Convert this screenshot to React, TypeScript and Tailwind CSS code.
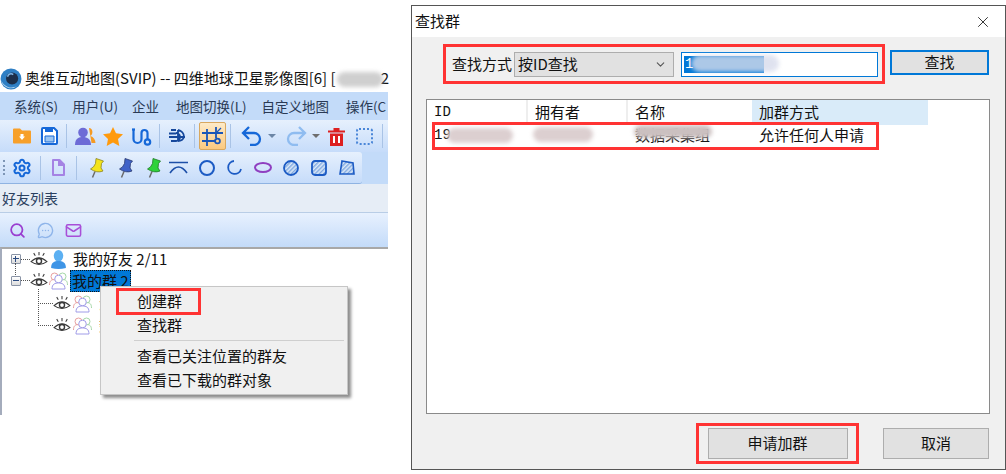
import { Search, MessageCircleMore, Mail, X, ChevronDown, Settings } from "lucide-react";

const cjk = "font-['Microsoft_YaHei','Noto_Sans_CJK_SC',sans-serif]";
const mono = "font-['Liberation_Mono',monospace]";

function Eye() {
  return (
    <svg width="18" height="15" viewBox="0 0 17 14" className="shrink-0" fill="none" stroke="#3a3a3a">
      <path d="M1 9 Q8.500 2 16 9 Q8.500 14.500 1 9Z" strokeWidth="1" />
      <circle cx="8.500" cy="8.500" r="2.400" strokeWidth="1.300" />
      <path d="M8.500 0v3M3.500 1l1.500 2.500M13.500 1L12 3.500" strokeWidth="1" />
    </svg>
  );
}

function Group() {
  return (
    <svg width="21" height="19" viewBox="0 0 20 19" className="shrink-0" fill="none">
      <circle cx="6" cy="5.500" r="3.500" stroke="#e8a0a0" />
      <path d="M1 14c0-4 1.500-5 4-5.500" stroke="#e8a0a0" />
      <circle cx="14" cy="5.500" r="3.500" stroke="#a5d8a8" />
      <path d="M19 14c0-4-1.500-5-4-5.500" stroke="#a5d8a8" />
      <circle cx="10" cy="8" r="3.800" fill="#fff" stroke="#a09ce8" />
      <path d="M3.500 18c0-5 3-6 6.500-6s6.500 1 6.500 6z" fill="#fff" stroke="#a09ce8" />
    </svg>
  );
}

function Sep({ ml }: { ml: string }) {
  return <div className={`h-[24px] w-px shrink-0 bg-[#a9c3e6] ${ml}`} />;
}

function Blur({ className }: { className: string }) {
  return <span className={`absolute rounded-full blur-[2px] ${className}`} />;
}

function Pushpin({ fill, line, ml }: { fill: string; line: string; ml: string }) {
  return (
    <svg width="14" height="20" viewBox="0 0 14 20" className={`shrink-0 ${ml}`}>
      <path d="M5 13.500L2.500 19.500" stroke="#6b6b6b" strokeWidth="1.500" />
      <path d="M6 0.500L13.500 3L11.500 5.500L11 10L13 13Q7 15.500 0.500 11Q4 9.500 5.500 5.500Z" fill={fill} stroke={line} strokeWidth="0.800" />
    </svg>
  );
}

function Hatch({ id }: { id: string }) {
  return (
    <pattern id={id} width="3" height="3" patternUnits="userSpaceOnUse" patternTransform="rotate(45)">
      <rect width="3" height="3" fill="#dbe8f8" />
      <rect width="1.400" height="3" fill="#7fa8e0" />
    </pattern>
  );
}

function Toolbars() {
  return (
    <>
      <div className="flex h-[32px] items-center bg-gradient-to-b from-[#e6f0fd] to-[#c6dcfa]">
        <svg width="20" height="18" viewBox="0 0 20 18" className="ml-[12px] shrink-0">
          <path d="M1 2.500a1 1 0 0 1 1-1h6l2 2h8a1 1 0 0 1 1 1v11a1 1 0 0 1-1 1H2a1 1 0 0 1-1-1z" fill="#f7a02a" />
          <path d="M7 9.500h6L10 13zM8.500 7h3v3h-3z" fill="#fff" />
        </svg>
        <svg width="17" height="18" viewBox="0 0 17 18" className="ml-[9px] shrink-0">
          <path d="M1 2a1 1 0 0 1 1-1h11l3 3v12a1 1 0 0 1-1 1H2a1 1 0 0 1-1-1z" fill="#fff" stroke="#1668d8" strokeWidth="2" />
          <path d="M4 1h8v4H4z" fill="#1668d8" />
          <path d="M4 9h9v6H4z" fill="#9cc6f2" stroke="#1668d8" />
        </svg>
        <Sep ml="ml-[8px]" />
        <svg width="21" height="19" viewBox="0 0 21 19" className="ml-[8px] shrink-0">
          <path d="M14 1c4 0 4.500 6 1.500 8 3 1 5 4 5 7h-4z" fill="#f59a23" />
          <circle cx="8" cy="5.500" r="4.800" fill="#6d6bd6" />
          <path d="M0 18c0-7 4-8 8-8s8 2 8 8z" fill="#6d6bd6" />
        </svg>
        <svg width="20" height="19" viewBox="0 0 20 19" className="ml-[7px] shrink-0">
          <path d="M10 0l3 6.300 7 .9-5 4.800 1.300 7L10 15.600 3.700 19 5 12 0 7.200l7-.9z" fill="#ff9a0d" />
        </svg>
        <svg width="20" height="19" viewBox="0 0 20 19" fill="none" stroke="#1668d8" strokeWidth="2.200" className="ml-[9px] shrink-0">
          <path d="M1.500 2v10a4 4 0 0 0 8 0V6a3 3 0 0 1 6 0v6" />
          <circle cx="15.500" cy="15" r="2.700" />
          <path d="M0 2.500h3" />
        </svg>
        <Sep ml="ml-[7px]" />
        <svg width="18" height="18" viewBox="0 0 18 18" fill="none" stroke="#16489c" strokeWidth="1.800" className="ml-[8px] shrink-0">
          <path d="M1 10h16M3 3h5M1 6.500h7M3 14h5a4 4 0 0 0 0-8M10 3v11M10 3a7 7 0 0 1 6 7M10 14c3 0 5-1 6-4" />
        </svg>
        <Sep ml="ml-[8px]" />
        <div className="ml-[4px] flex h-[28px] w-[27px] shrink-0 items-center justify-center rounded-[2px] border border-[#d8a860] bg-gradient-to-b from-[#fdeac7] to-[#fbc97f]">
          <svg width="21" height="20" viewBox="0 0 21 20" fill="none" stroke="#1a56b8" strokeWidth="1.800">
            <path d="M0 7h21M0 15h14M5 3v17M14 1v11" />
            <circle cx="15.500" cy="15" r="2.400" />
            <path d="M14 7l5-5" strokeWidth="1.200" />
          </svg>
        </div>
        <Sep ml="ml-[4px]" />
        <svg width="22" height="20" viewBox="0 0 22 20" fill="none" stroke="#1668d8" strokeWidth="2.300" className="ml-[10px] shrink-0">
          <path d="M8 1L2 7l6 6M2 7h11a6 6 0 0 1 0 12h-4" />
        </svg>
        <div className="ml-[5px] h-0 w-0 shrink-0 border-x-[4px] border-t-[4px] border-x-transparent border-t-[#6c86a6]" />
        <svg width="22" height="20" viewBox="0 0 22 20" fill="none" stroke="#8fbcf0" strokeWidth="2.300" className="ml-[9px] shrink-0">
          <path d="M14 1l6 6-6 6M20 7H9a6 6 0 0 0 0 12h4" />
        </svg>
        <div className="ml-[5px] h-0 w-0 shrink-0 border-x-[4px] border-t-[4px] border-x-transparent border-t-[#6e6e6e]" />
        <svg width="17" height="19" viewBox="0 0 17 19" className="ml-[8px] shrink-0">
          <path d="M0 3.500h17v2H0zM5.500 1h6v2.500h-6zM2 6.500h13V19H2z" fill="#dd2020" />
          <path d="M6 9v7M11 9v7" stroke="#fff" strokeWidth="2" />
        </svg>
        <div className="ml-[11px] h-[17px] w-[17px] shrink-0 rounded-[3px] border-2 border-dotted border-[#4a86d8]" />
        <Sep ml="ml-[9px]" />
      </div>
      <div className="flex h-[32px] items-center bg-[#c3dbf9]">
        <div className="flex h-full w-[362px] items-center rounded-r-[3px] border-b border-[#8fb3e2] bg-gradient-to-b from-[#e6f0fd] to-[#c6dcfa] pl-[3px]">
          <div className="h-[15px] w-0 shrink-0 border-l-2 border-dotted border-[#7d95b5]" />
          <Settings size={20} color="#1668d8" strokeWidth={2.4} className="ml-[7px] shrink-0" />
          <Sep ml="ml-[8px]" />
          <svg width="14" height="17" viewBox="0 0 14 17" fill="none" stroke="#a583e4" strokeWidth="2" className="ml-[10px] shrink-0">
            <path d="M2 1h6.500L13 5.500V16H2z" strokeLinejoin="round" />
            <path d="M8 1v5h5" fill="#a583e4" />
          </svg>
          <Sep ml="ml-[11px]" />
          <Pushpin fill="#f3e41c" line="#8c8420" ml="ml-[13px]" />
          <Pushpin fill="#3f62c8" line="#2a3a70" ml="ml-[15px]" />
          <Pushpin fill="#2fd23a" line="#1e7a24" ml="ml-[14px]" />
          <svg width="19" height="13" viewBox="0 0 19 13" fill="none" stroke="#1c4fa8" strokeWidth="1.600" className="ml-[8px] shrink-0">
            <path d="M0 1.500h19M1 12Q9.500 0 18 12" />
          </svg>
          <div className="ml-[11px] h-[16px] w-[16px] shrink-0 rounded-full border-2 border-[#1c5bc4]" />
          <svg width="15" height="15" viewBox="0 0 15 15" fill="none" stroke="#1c5bc4" strokeWidth="1.800" className="ml-[12px] shrink-0">
            <path d="M7 1a6.500 6.500 0 1 0 7 8" />
          </svg>
          <div className="ml-[12px] h-[11px] w-[18px] shrink-0 rounded-[50%] border-2 border-[#8f3fc0]" />
          <svg width="16" height="16" viewBox="0 0 16 16" className="ml-[11px] shrink-0">
            <defs><Hatch id="hatch-a" /></defs>
            <circle cx="8" cy="8" r="7" fill="url(#hatch-a)" stroke="#1c5bc4" strokeWidth="1.800" />
          </svg>
          <svg width="16" height="16" viewBox="0 0 16 16" className="ml-[12px] shrink-0">
            <defs><Hatch id="hatch-b" /></defs>
            <rect x="1" y="1" width="14" height="14" rx="3" fill="url(#hatch-b)" stroke="#1c5bc4" strokeWidth="1.800" />
          </svg>
          <svg width="16" height="15" viewBox="0 0 16 15" className="ml-[12px] shrink-0">
            <defs><Hatch id="hatch-c" /></defs>
            <path d="M3 1l11 2 1 11H1z" fill="url(#hatch-c)" stroke="#1c5bc4" strokeWidth="1.600" />
          </svg>
        </div>
      </div>
    </>
  );
}

function ExpandBox({ open }: { open: boolean }) {
  return (
    <div className="relative h-[10px] w-[10px] shrink-0 rounded-[1px] border border-[#8a94a6] bg-gradient-to-b from-white to-[#dcdcdc]">
      <div className="absolute top-[3px] left-[1px] h-px w-[6px] bg-[#2a4a80]" />
      {!open && <div className="absolute top-[1px] left-[3px] h-[6px] w-px bg-[#2a4a80]" />}
    </div>
  );
}

function ChildRow({ label }: { label: string }) {
  return (
    <div className="flex h-[22px] items-center pl-[36px]">
      <div className="h-0 w-[15px] shrink-0 border-t border-dotted border-[#555]" />
      <Eye />
      <span className="ml-[1px]"><Group /></span>
      <span className="ml-[6px]">{label}</span>
    </div>
  );
}

function LeftPanel() {
  return (
    <div className={`w-[388px] shrink-0 pt-[65px] ${cjk}`}>
      <div className="flex h-[27px] items-center text-[15px] text-[#111]">
        <svg width="22" height="22" viewBox="0 0 20 20" className="shrink-0">
          <circle cx="10" cy="10" r="9.500" fill="#2f7fc4" />
          <circle cx="11" cy="9.500" r="5.500" fill="#1d2f4a" />
          <path d="M7 8a3 3 0 0 1 5-2" stroke="#7db4e6" strokeWidth="1.500" fill="none" />
          <path d="M1 11a9 9 0 0 0 15 5A10 10 0 0 1 1 11z" fill="#b7d6f0" />
        </svg>
        <span className="ml-[3px] whitespace-nowrap">奥维互动地图(SVIP) -- 四维地球卫星影像图[6] [</span>
        <span className="relative ml-[3px] w-[42px] shrink-0">
          <Blur className="-top-[7px] -left-[2px] h-[15px] w-[46px] bg-[#cfcfcf]" />
        </span>
        <span>2</span>
      </div>
      <div className="flex h-[28px] items-center gap-[14px] overflow-hidden whitespace-nowrap bg-[#c3dbf9] pl-[14px] text-[13.5px] text-[#2a3a55]">
        <span>系统(S)</span>
        <span>用户(U)</span>
        <span>企业</span>
        <span className="ml-[3px]">地图切换(L)</span>
        <span className="ml-[1px]">自定义地图</span>
        <span className="ml-[3px]">操作(C</span>
      </div>
      <Toolbars />
      <div className="flex h-[29px] items-center border-b border-[#b9cde6] bg-[#e6edf6] pl-[2px] text-[14px] text-[#2a4060]">好友列表</div>
      <div className="flex h-[34px] items-center gap-[11px] bg-gradient-to-b from-[#e8f1fe] to-[#c3dbf9] pl-[9px]">
        <Search size={17} color="#9a3fd0" strokeWidth={2.5} />
        <MessageCircleMore size={17} color="#8fb5ea" />
        <Mail size={17} color="#a84fd8" strokeWidth={2.2} />
      </div>
      <div className="relative h-[168px] border-t-2 border-l-2 border-t-[#a8a8a8] border-l-[#a4acbc] bg-white text-[15px] text-[#111]">
        <div className="flex h-[20px] items-center pl-[9px]">
          <ExpandBox open={false} />
          <div className="h-0 w-[9px] shrink-0 border-t border-dotted border-[#555]" />
          <Eye />
          <svg width="15" height="19" viewBox="0 0 14 18" className="ml-[3px] shrink-0">
            <ellipse cx="7" cy="5.500" rx="4.500" ry="5.500" fill="#5cb0f2" />
            <path d="M0 17c0-5 3-6.500 7-6.500s7 1.500 7 6.500q-7 2-14 0z" fill="#3f95e6" />
          </svg>
          <span className="ml-[7px] whitespace-nowrap">我的好友 2/11</span>
        </div>
        <div className="flex h-[23px] items-center pl-[9px]">
          <ExpandBox open />
          <div className="h-0 w-[9px] shrink-0 border-t border-dotted border-[#555]" />
          <Eye />
          <Group />
          <span className="ml-[1px] h-[22px] whitespace-nowrap border border-dotted border-[#111] bg-[#0078d7] px-[1px] leading-[20px]">我的群 2</span>
        </div>
        <ChildRow label="浏" />
        <ChildRow label="数" />
        <div className="absolute top-[14px] left-[13px] h-[12px] border-l border-dotted border-[#555]" />
        <div className="absolute top-[40px] left-[36px] h-[35px] border-l border-dotted border-[#555]" />
        {/* context menu */}
        <div className="absolute top-[37px] left-[98px] w-[248px] border border-[#c6c6c6] bg-[#f0f0f0] pt-[2px] pb-[2px] text-[15px] text-[#111] shadow-[3px_3px_3px_rgba(0,0,0,0.45)]">
          <div className="flex h-[24px] items-center pl-[36px]">创建群</div>
          <div className="flex h-[24px] items-center pl-[36px]">查找群</div>
          <div className="mt-[3px] mb-[3px] ml-[33px] mr-[3px] h-px bg-[#cfcfcf]" />
          <div className="flex h-[24px] items-center pl-[36px]">查看已关注位置的群友</div>
          <div className="flex h-[24px] items-center pl-[36px]">查看已下载的群对象</div>
          <div className="absolute top-[1px] left-[15px] h-[27px] w-[85px] border-[3px] border-[#ff3333]" />
        </div>
      </div>
    </div>
  );
}

function Dialog() {
  const btn = "flex items-center justify-center bg-[#e1e1e1] text-[15px] text-[#111]";
  return (
    <div className={`mt-[5px] ml-[23px] flex h-[465px] w-[595px] shrink-0 flex-col border border-[#555] bg-[#f0f0f0] ${cjk}`}>
      <div className="flex h-[31px] items-center justify-between bg-white pl-[3px] pr-[13px] text-[15px] text-[#111]">
        <span>查找群</span>
        <X size={18} color="#222" strokeWidth={1.2} />
      </div>
      <div className="flex items-start pt-[7px]">
        <div className="ml-[31px] flex h-[40px] w-[442px] items-center border-[3px] border-[#ff3333] pl-[6px]">
          <span className="w-[62px] shrink-0 whitespace-nowrap text-[15px] text-[#111]">查找方式</span>
          <div className="flex h-[25px] w-[160px] items-center justify-between border border-[#adadad] bg-[#e1e1e1] px-[3px] text-[15px] text-[#111]">
            <span>按ID查找</span>
            <ChevronDown size={13} color="#555" className="mr-[3px]" />
          </div>
          <div className={`relative ml-[7px] flex h-[25px] w-[197px] items-center border border-[#0078d7] bg-white pl-[2px] text-[14px] ${mono}`}>
            <span className="h-[17px] w-[80px] bg-[#0078d7] pl-[1px] leading-[17px] text-white">1</span>
            <Blur className="top-[2px] left-[9px] h-[17px] w-[88px] bg-[#d8dcec] opacity-80" />
          </div>
        </div>
        <div className={`mt-[6px] ml-[5px] h-[25px] w-[99px] border-2 border-[#0078d7] ${btn}`}>查找</div>
      </div>
      <div className="relative mt-[15px] mr-[15px] ml-[14px] h-[315px] border border-[#8a8a8a] bg-white text-[15px] text-[#111]">
        <div className="flex h-[25px] items-center">
          <div className={`flex h-full w-[101px] items-center border-r-2 border-[#eeeeee] pl-[7px] text-[14px] ${mono}`}>ID</div>
          <div className="flex h-full w-[100px] items-center border-r-2 border-[#eeeeee] pl-[7px]">拥有者</div>
          <div className="flex h-full w-[124px] items-center pl-[7px]">名称</div>
          <div className="flex h-full w-[176px] items-center bg-[#d9ebf9] pl-[7px]">加群方式</div>
        </div>
        <div className="flex h-[20px] items-center">
          <div className={`relative h-full w-[101px] pl-[7px] text-[14px] leading-[20px] ${mono}`}>
            19
            <Blur className="top-[3px] left-[20px] h-[15px] w-[66px] bg-[#dccfd0]" />
          </div>
          <div className="relative h-full w-[100px]">
            <Blur className="top-[2px] left-[5px] h-[15px] w-[60px] bg-[#dccfd0]" />
          </div>
          <div className="relative h-full w-[124px] pl-[7px] leading-[20px]">
            数据采集组
            <Blur className="top-0 left-[6px] h-[13px] w-[78px] bg-[#cbc0c0]" />
          </div>
          <div className="pl-[7px]">允许任何人申请</div>
        </div>
        <div className="absolute top-[22px] left-[5px] h-[28px] w-[447px] border-[3px] border-[#ff3333]" />
      </div>
      <div className="mt-[9px] flex items-center pl-[284px]">
        <div className="flex h-[41px] w-[163px] items-center justify-center border-[3px] border-[#ff3333]">
          <div className={`h-[31px] w-[140px] border border-[#adadad] ${btn}`}>申请加群</div>
        </div>
        <div className={`ml-[24px] h-[31px] w-[106px] border border-[#adadad] ${btn}`}>取消</div>
      </div>
    </div>
  );
}

export default function App() {
  return (
    <div className="flex h-[474px] w-[1006px] overflow-hidden bg-white">
      <LeftPanel />
      <Dialog />
    </div>
  );
}
